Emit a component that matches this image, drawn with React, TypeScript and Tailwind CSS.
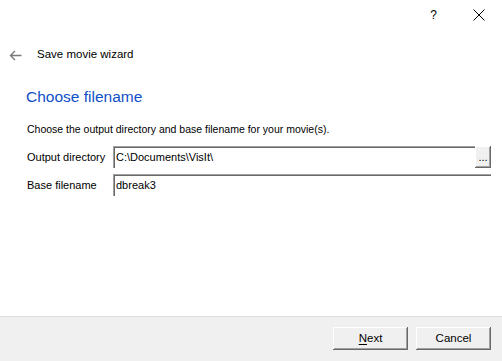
import React from 'react';

const ui = { fontFamily: '"Liberation Sans", Arial, sans-serif' };

// Sunken edit field, old win32 style
const Field = ({ value, className = '' }: { value: string; className?: string }) => (
  <div
    className={`h-[22px] bg-white flex items-center pl-[3px] text-[11px] text-black shadow-[inset_1px_1px_0_#a0a0a0,inset_2px_2px_0_#696969] ${className}`}
  >
    {value}
  </div>
);

const Button = ({ children }: { children: React.ReactNode }) => (
  <button className="w-[75px] h-[23px] bg-[#f0f0f0] text-[11.5px] text-black flex items-center justify-center shadow-[inset_-1px_-1px_0_#696969,inset_1px_1px_0_#ffffff,inset_-2px_-2px_0_#a0a0a0]">
    {children}
  </button>
);

export default function App() {
  return (
    <div className="w-[502px] h-[361px] bg-white flex flex-col overflow-hidden" style={ui}>
      {/* title bar */}
      <div className="h-[30px] flex items-center justify-end">
        <span className="text-[12px] text-black mr-[36px]">?</span>
        <svg width="12" height="12" viewBox="0 0 12 12" className="mr-[17px]">
          <path d="M0.5 0.5 L11.5 11.5 M11.5 0.5 L0.5 11.5" stroke="#000" strokeWidth="1" />
        </svg>
      </div>

      {/* header */}
      <div className="h-[28px] mt-[11px] flex items-center">
        <svg width="13" height="11" viewBox="0 0 13 11" className="ml-[9px]">
          <path d="M12.5 5.5 H1.5 M6 1 L1.5 5.5 L6 10" stroke="#7a7a7a" strokeWidth="1.4" fill="none" />
        </svg>
        <span className="ml-[15px] text-[11.5px] text-black">Save movie wizard</span>
      </div>

      {/* page */}
      <div className="flex-1 pl-[26px] pr-[11px]">
        <div className="mt-[18px] text-[15.5px] leading-[20px] text-[#0f4fc6]">Choose filename</div>
        <div className="mt-[14px] pl-[1px] text-[10.5px] leading-[16px] text-black">
          Choose the output directory and base filename for your movie(s).
        </div>
        <div className="mt-[9px] pl-[1px] flex items-center">
          <span className="w-[86px] text-[11px] text-black whitespace-nowrap">Output directory</span>
          <Field value="C:\Documents\VisIt\" className="flex-1" />
          <button className="w-[16px] h-[22px] bg-[#f0f0f0] text-[11px] leading-none flex items-end justify-center pb-[5px] shadow-[inset_-1px_-1px_0_#696969,inset_1px_1px_0_#ffffff,inset_-2px_-2px_0_#a0a0a0]">
            ...
          </button>
        </div>
        <div className="mt-[6px] pl-[1px] flex items-center">
          <span className="w-[86px] text-[11px] text-black whitespace-nowrap">Base filename</span>
          <Field value="dbreak3" className="flex-1" />
        </div>
      </div>

      {/* footer */}
      <div className="h-[45px] bg-[#f0f0f0] border-t border-[#dfdfdf] flex items-start justify-end gap-[8px] pt-[10px] pr-[11px]">
        <Button>
          <span className="underline underline-offset-2">N</span>ext
        </Button>
        <Button>Cancel</Button>
      </div>
    </div>
  );
}
